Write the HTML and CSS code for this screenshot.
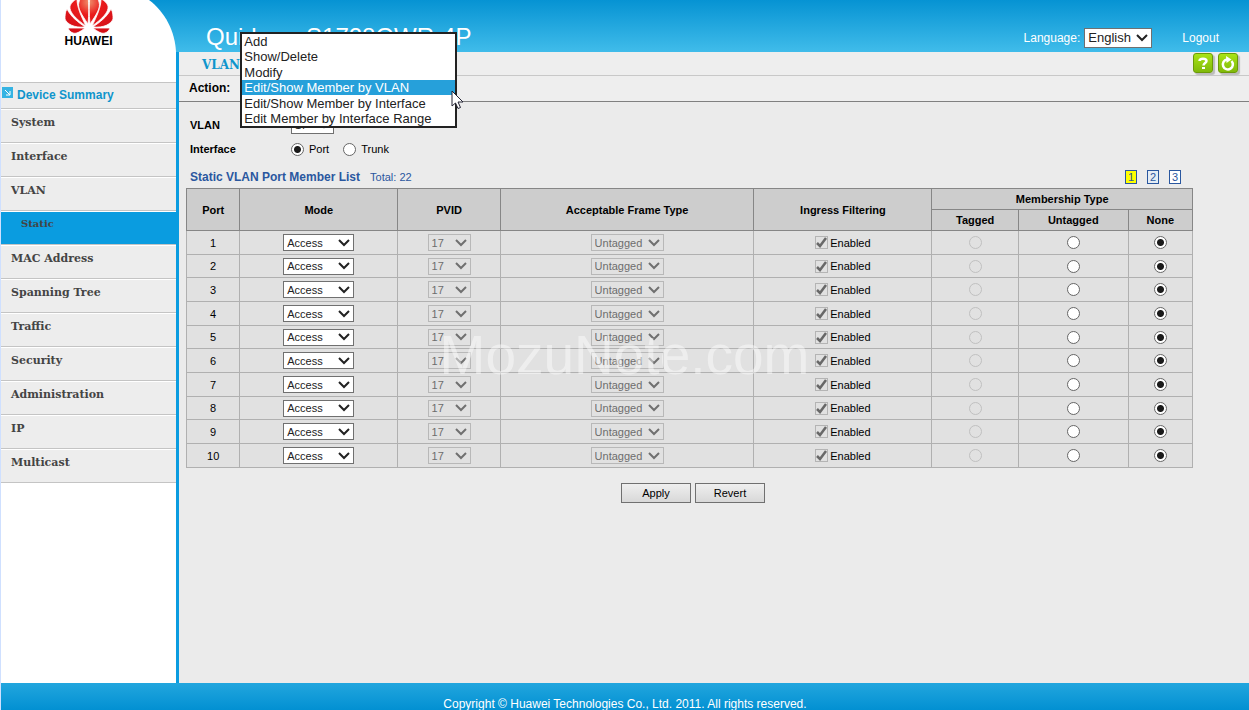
FILE: index.html
```html
<!DOCTYPE html>
<html lang="en">
<head>
  <meta charset="UTF-8">
  <meta name="viewport" content="width=device-width, initial-scale=1.0">
  <title>Quidway S1728GWR-4P</title>
  <link rel="stylesheet" href="styles.css">
</head>
<body>
  <div class="page">
    <aside class="sidebar">
      <div class="brand-wrap">
        <div class="brand">
          <svg width="48" height="34" viewBox="0 0 48 34" aria-hidden="true">
            <defs>
              <radialGradient id="petal" gradientUnits="userSpaceOnUse" cx="24" cy="2" r="32">
                <stop offset="0" stop-color="#f0906c"/>
                <stop offset="0.4" stop-color="#ea1c1c"/>
                <stop offset="1" stop-color="#d40f18"/>
              </radialGradient>
            </defs>
            <g fill="url(#petal)" stroke="#fff" stroke-width="0.8">
              <path d="M23 24C17 15 12 8 14 2C15 -2 19 -4 23 -4C24 4 24 14 23 24Z"/>
              <path d="M25 24C31 15 36 8 34 2C33 -2 29 -4 25 -4C24 4 24 14 25 24Z"/>
              <path d="M21 26C11 19 4 12 5 6C6 3 9 0 12 -1C12 7 16 16 21 26Z"/>
              <path d="M27 26C37 19 44 12 43 6C42 3 39 0 36 -1C36 7 32 16 27 26Z"/>
              <path d="M20 27C9 28 2 24 0 19C0 16 0 12 2 9C6 17 13 22 20 27Z"/>
              <path d="M28 27C39 28 46 24 48 19C48 16 48 12 46 9C42 17 35 22 28 27Z"/>
              <path d="M20 28C15 32 11 34 8 33C5 32 4 30 3 28Z"/>
              <path d="M28 28C33 32 37 34 40 33C43 32 44 30 45 28Z"/>
            </g>
          </svg>
          <span class="brand-name">HUAWEI</span>
        </div>
      </div>
      <a class="summary" href="#">
        <svg width="11" height="11" viewBox="0 0 11 11" aria-hidden="true">
          <rect width="11" height="11" fill="#35b3e3"/>
          <path d="M3 3L8 8M8 4V8H4" fill="none" stroke="#fff"/>
        </svg>
        Device Summary
      </a>
      <nav class="menu">
        <a href="#">System</a>
        <a href="#">Interface</a>
        <a href="#">VLAN</a>
        <a class="sub active" href="#">Static</a>
        <a href="#">MAC Address</a>
        <a href="#">Spanning Tree</a>
        <a href="#">Traffic</a>
        <a href="#">Security</a>
        <a href="#">Administration</a>
        <a href="#">IP</a>
        <a href="#">Multicast</a>
      </nav>
    </aside>

    <div class="content">
      <header class="topbar">
        <h1>Quidway S1728GWR-4P</h1>
        <div class="tools">
          <label for="language">Language:</label>
          <select id="language"><option>English</option></select>
          <a href="#">Logout</a>
        </div>
      </header>

      <main class="main">
        <div class="crumb">
          <h2>VLAN &gt; Static</h2>
          <div class="crumb-buttons">
            <button type="button" aria-label="Help">
              <svg width="18" height="18" viewBox="0 0 18 18" aria-hidden="true"><path d="M5.500 7C5.500 4 12.500 4 12.500 7C12.500 9 9.500 9 9.500 11.500" fill="none" stroke="#fff" stroke-width="2.500"/><rect x="8" y="13" width="3" height="2" fill="#fff"/></svg>
            </button>
            <button type="button" aria-label="Refresh">
              <svg width="18" height="18" viewBox="0 0 18 18" aria-hidden="true"><path d="M12.500 7A5 5 0 1 1 8 5.500" fill="none" stroke="#fff" stroke-width="2.500"/><path d="M7 2L12.500 5.500L7.500 9Z" fill="#fff"/></svg>
            </button>
          </div>
        </div>

        <div class="action">
          <label for="action">Action:</label>
          <div class="dropdown">
            <select id="action">
              <option>Edit/Show Member by VLAN</option>
            </select>
            <ul class="dropdown-list" role="listbox" aria-label="Action">
              <li role="option">Add</li>
              <li role="option">Show/Delete</li>
              <li role="option">Modify</li>
              <li role="option" class="selected" aria-selected="true">Edit/Show Member by VLAN</li>
              <li role="option">Edit/Show Member by Interface</li>
              <li role="option">Edit Member by Interface Range</li>
            </ul>
            <svg class="pointer" width="13" height="20" viewBox="0 0 13 20" aria-hidden="true"><path d="M1 1V16L4.500 13L7 18.500L9.500 17.500L7 12H12Z" fill="#fff" stroke="#223"/></svg>
          </div>
        </div>

        <form class="panel">
          <div class="field">
            <label class="field-name" for="vlan">VLAN</label>
            <select id="vlan" class="short"><option>17</option></select>
          </div>
          <div class="field" role="radiogroup" aria-label="Interface">
            <span class="field-name">Interface</span>
            <label class="choice"><input type="radio" name="iface" checked>Port</label>
            <label class="choice"><input type="radio" name="iface">Trunk</label>
          </div>

          <div class="list-head">
            <h3>Static VLAN Port Member List</h3>
            <span>Total: 22</span>
            <nav class="pager" aria-label="Pages">
              <a class="current" href="#">1</a>
              <a class="visited" href="#">2</a>
              <a href="#">3</a>
            </nav>
          </div>

          <table class="members">
            <colgroup>
              <col class="c-port"><col class="c-mode"><col class="c-pvid"><col class="c-frame">
              <col class="c-ingress"><col class="c-tagged"><col class="c-untagged"><col class="c-none">
            </colgroup>
            <thead>
              <tr>
                <th rowspan="2">Port</th>
                <th rowspan="2">Mode</th>
                <th rowspan="2">PVID</th>
                <th rowspan="2">Acceptable Frame Type</th>
                <th rowspan="2">Ingress Filtering</th>
                <th colspan="3">Membership Type</th>
              </tr>
              <tr>
                <th>Tagged</th>
                <th>Untagged</th>
                <th>None</th>
              </tr>
            </thead>
            <tbody id="rows"></tbody>
          </table>

          <div class="buttons">
            <button type="button">Apply</button>
            <button type="reset">Revert</button>
          </div>
        </form>
      </main>
    </div>
  </div>
  <footer class="footer">Copyright © Huawei Technologies Co., Ltd. 2011. All rights reserved.</footer>
  <div class="watermark">MozuNote.com</div>

  <script>
    const rows = document.getElementById('rows');

    // one row per port on this page of the list
    for (let port = 1; port <= 10; port++) {
      const row = document.createElement('tr');
      row.innerHTML = `
        <td>${port}</td>
        <td><select class="mode" aria-label="Mode of port ${port}"><option>Access</option></select></td>
        <td><select class="short" aria-label="PVID of port ${port}" disabled><option>17</option></select></td>
        <td><select class="frame" aria-label="Frame type of port ${port}" disabled><option>Untagged</option></select></td>
        <td><label class="check"><input type="checkbox" checked disabled>Enabled</label></td>
        <td><input type="radio" name="member${port}" aria-label="Tagged" disabled></td>
        <td><input type="radio" name="member${port}" aria-label="Untagged"></td>
        <td><input type="radio" name="member${port}" aria-label="None" checked></td>
      `;
      rows.appendChild(row);
    }
  </script>
</body>
</html>
```
FILE: styles.css
```css
* {
  margin: 0;
  padding: 0;
  box-sizing: border-box;
}

body {
  display: flex;
  flex-direction: column;
  min-height: 100vh;
  border-left: 1px solid #cfe0ff;
  background: #ebebeb;
  color: #000;
  font: 11px/14px "Liberation Sans", Arial, sans-serif;
}

a {
  color: inherit;
  text-decoration: none;
}

.page {
  display: grid;
  grid-template-columns: 175px 1fr;
  flex: 1;
}

/* sidebar */
.sidebar {
  background: #fff;
}

.brand-wrap {
  background: linear-gradient(#0693d3, #40bcea) 0 0 / 100% 52px no-repeat #fff;
}

.brand {
  display: flex;
  flex-direction: column;
  align-items: center;
  height: 82px;
  background: #fff;
  clip-path: path("M0 0H148C164 12 174 31 175 52V82H0Z");
}

.brand-name {
  font-size: 12px;
  font-weight: bold;
}

.summary {
  display: flex;
  gap: 4px;
  height: 27px;
  padding: 4px 1px;
  border-top: 1px solid #c4c4c4;
  border-bottom: 1px solid #c4c4c4;
  background: #ededed;
  color: #0f95cc;
  font-size: 12px;
  font-weight: bold;
  line-height: 16px;
}

.menu a {
  display: block;
  height: 34px;
  padding: 5px 10px;
  border-top: 1px solid #fff;
  border-bottom: 1px solid #c4c4c4;
  background: #ededed;
  color: #444;
  font-family: "DejaVu Serif", serif;
  font-size: 11px;
  font-weight: bold;
  line-height: 16px;
}

.menu .sub {
  padding: 4px 20px;
  font-size: 10px;
}

.menu .active {
  background: #0a9ce0;
}

/* header */
.topbar {
  display: flex;
  justify-content: space-between;
  height: 52px;
  padding: 23px 30px 0;
  background: linear-gradient(#0693d3, #40bcea);
  color: #fff;
}

.topbar h1 {
  font-size: 24px;
  font-weight: normal;
  line-height: 28px;
}

.tools {
  display: flex;
  align-items: center;
  gap: 4px;
  font-size: 12px;
}

.tools select {
  width: 68px;
  height: 20px;
  font-size: 13px;
}

.tools a {
  margin-left: 26px;
}

.content {
  display: flex;
  flex-direction: column;
}

.main {
  flex: 1;
  border-left: 3px solid #0a9ce0;
}

.crumb {
  display: flex;
  justify-content: space-between;
  height: 24px;
  padding: 1px 11px 0 23px;
  border-bottom: 1px solid #c8c8c8;
  background: #eee;
}

.crumb h2 {
  color: #0f95cc;
  font-family: "DejaVu Serif", serif;
  font-size: 12px;
  line-height: 24px;
}

.crumb-buttons {
  display: flex;
  gap: 5px;
}

.crumb-buttons button {
  width: 20px;
  height: 20px;
  border: 1px solid #6b9a08;
  border-radius: 3px;
  background: linear-gradient(#a8e416, #80b90a);
  box-shadow: 2px 2px 1px #bbb;
}

.crumb-buttons svg {
  display: block;
}

.action {
  display: flex;
  align-items: center;
  gap: 10px;
  height: 26px;
  padding: 0 0 2px 10px;
  border-bottom: 1px solid #808080;
  background: #eee;
  font-size: 12px;
  font-weight: bold;
}

/* action list, open over the page */
.dropdown {
  position: relative;
  width: 217px;
}

.dropdown select {
  display: block;
  width: 100%;
}

.dropdown-list {
  position: absolute;
  z-index: 2;
  bottom: -32px;
  left: 0;
  display: flex;
  flex-direction: column;
  justify-content: space-between;
  width: 100%;
  height: 96px;
  border: 2px solid #222;
  background: #fff;
  color: #222;
  font-size: 13px;
  font-weight: normal;
  line-height: 15px;
  list-style: none;
}

.dropdown-list li {
  padding: 0 2px;
}

.dropdown-list .selected {
  background: #26a0da;
  color: #fff;
}

.pointer {
  position: absolute;
  z-index: 3;
  top: 11px;
  left: 211px;
}

/* controls */
select {
  height: 17px;
  padding: 0 3px;
  border: 1px solid #707070;
  border-radius: 0;
  appearance: none;
  background: #fff url("data:image/svg+xml,%3Csvg xmlns='http://www.w3.org/2000/svg' width='12' height='8'%3E%3Cpath d='M1 1L6 6L11 1' fill='none' stroke='%23222' stroke-width='2'/%3E%3C/svg%3E") right 3px center no-repeat;
  color: #222;
  font: 11px "Liberation Sans", Arial, sans-serif;
}

select:disabled {
  border-color: #b8b8b8;
  background-color: #e1e1e1;
  background-image: url("data:image/svg+xml,%3Csvg xmlns='http://www.w3.org/2000/svg' width='12' height='8'%3E%3Cpath d='M1 1L6 6L11 1' fill='none' stroke='%23707070' stroke-width='2'/%3E%3C/svg%3E");
  color: #6d6d6d;
  opacity: 1;
}

.short {
  width: 43px;
}

.mode {
  width: 71px;
}

.frame {
  width: 73px;
}

input[type="radio"] {
  display: block;
  width: 13px;
  height: 13px;
  border: 1px solid #666;
  border-radius: 50%;
  appearance: none;
  background: #fff;
}

input[type="radio"]:checked {
  background: radial-gradient(circle, #1a1a1a 3px, #fff 4px);
}

input[type="radio"]:disabled {
  border-color: #c0c0c0;
  background: #e1e1e1;
}

input[type="checkbox"] {
  width: 13px;
  height: 13px;
  border: 1px solid #b4b4b4;
  appearance: none;
  background: url("data:image/svg+xml,%3Csvg xmlns='http://www.w3.org/2000/svg' width='11' height='11'%3E%3Cpath d='M1 6L4 9L10 1' fill='none' stroke='%23686868' stroke-width='2.5'/%3E%3C/svg%3E") center no-repeat;
}

/* form */
.panel {
  padding: 11px 56px 12px 7px;
}

.field {
  display: flex;
  align-items: center;
  height: 24px;
  padding-left: 4px;
}

.field-name {
  width: 101px;
  font-weight: bold;
}

.choice {
  display: flex;
  align-items: center;
  gap: 5px;
  margin-right: 14px;
}

.list-head {
  display: flex;
  align-items: center;
  gap: 10px;
  height: 27px;
  padding: 5px 12px 1px 4px;
  color: #2a579f;
}

.list-head h3 {
  font-size: 12px;
}

.pager {
  display: flex;
  gap: 10px;
  margin-left: auto;
}

.pager a {
  width: 12px;
  height: 14px;
  border: 1px solid #2a579f;
  background: #fff;
  line-height: 12px;
  text-align: center;
}

.pager .current {
  background: #ff0;
}

.pager .visited {
  background: #e4ecf4;
}

.members {
  width: 100%;
  border-collapse: collapse;
  table-layout: fixed;
}

.members th {
  height: 21px;
  border: 1px solid #868686;
  background: #cdcdcd;
}

.members td {
  height: 24px;
  border: 1px solid #b0b0b0;
  background: #e1e1e1;
  text-align: center;
}

/* rows average a little under 24px */
.members tbody tr:nth-child(3n + 2) td {
  height: 23px;
}

.members td select {
  display: block;
  margin: 0 auto;
}

.members td input[type="radio"] {
  margin: 0 auto;
}

.check {
  display: flex;
  align-items: center;
  justify-content: center;
  gap: 2px;
}

.c-port { width: 5.3%; }
.c-mode { width: 15.7%; }
.c-pvid { width: 10.2%; }
.c-frame { width: 25.2%; }
.c-ingress { width: 17.7%; }
.c-tagged { width: 8.6%; }
.c-untagged { width: 10.9%; }
.c-none { width: 6.4%; }

.buttons {
  display: flex;
  justify-content: center;
  gap: 4px;
  padding: 15px 0 0 7px;
}

.buttons button {
  width: 70px;
  height: 20px;
  border: 1px solid #707070;
  background: linear-gradient(#efefef, #d8d8d8);
  font: 11px "Liberation Sans", Arial, sans-serif;
}

.footer {
  height: 27px;
  padding-top: 15px;
  background: linear-gradient(#22a6de, #0290d2);
  color: #fff;
  font-size: 12px;
  line-height: 12px;
  text-align: center;
}

.watermark {
  position: fixed;
  z-index: 1;
  inset: 0;
  display: flex;
  align-items: center;
  justify-content: center;
  color: rgba(255, 255, 255, 0.45);
  font-size: 55px;
  line-height: 60px;
  pointer-events: none;
}
```
